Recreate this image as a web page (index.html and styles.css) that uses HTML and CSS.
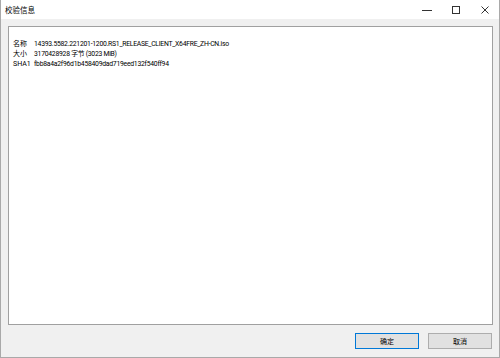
FILE: index.html
```html
<!DOCTYPE html>
<html>
<head>
    <meta charset="UTF-8">
    <title>校验信息</title>
    <link rel="stylesheet" href="styles.css">
</head>
<body>
    <div class="window">
        <div class="title-bar">
            <span class="title">校验信息</span>
            <div class="controls">
                <span class="ctrl">
                    <svg width="10" height="10" viewBox="0 0 10 10"><path d="M0 5.5H10" stroke="#333" stroke-width="1"/></svg>
                </span>
                <span class="ctrl">
                    <svg width="10" height="10" viewBox="0 0 10 10"><rect x="1.5" y="1.5" width="7" height="7" fill="none" stroke="#333" stroke-width="1"/></svg>
                </span>
                <span class="ctrl">
                    <svg width="10" height="10" viewBox="0 0 10 10"><path d="M1.5 1.5L8.5 8.5M8.5 1.5L1.5 8.5" stroke="#333" stroke-width="1"/></svg>
                </span>
            </div>
        </div>

        <div class="panel">
            <div class="row"><span class="label">名称</span><span class="value">14393.5582.221201-1200.RS1_RELEASE_CLIENT_X64FRE_ZH-CN.iso</span></div>
            <div class="row"><span class="label">大小</span><span class="value">3170428928 字节 (3023 MiB)</span></div>
            <div class="row"><span class="label">SHA1</span><span class="value">fbb8a4a2f96d1b458409dad719eed132f540ff94</span></div>
        </div>

        <div class="footer">
            <button class="btn btn-default">确定</button>
            <button class="btn">取消</button>
        </div>
    </div>
</body>
</html>
```

FILE: styles.css
```css
body {
    margin: 0;
    font-family: Roboto, "Noto Sans CJK SC", sans-serif;
    color: #000;
    background-color: #fff;
}

.window {
    box-sizing: border-box;
    width: 500px;
    height: 358px;
    border: 1px solid #a9a9a9;
    border-top: none;
    background-color: #f0f0f0;
    display: flex;
    flex-direction: column;
}

.title-bar {
    height: 19px;
    background-color: #fff;
    display: flex;
    align-items: center;
    justify-content: space-between;
}

.title {
    padding-left: 4px;
    font-size: 7.5px;
    font-family: "Noto Sans CJK SC", sans-serif;
}

.controls {
    display: flex;
    height: 100%;
}

.ctrl {
    width: 29px;
    display: flex;
    align-items: center;
    justify-content: center;
}

.panel {
    box-sizing: border-box;
    margin: 7px 6px 0 7px;
    height: 299px;
    background-color: #fff;
    border: 1px solid #a0a0a0;
    padding: 12px 0 0 4px;
    font-size: 7px;
}

.row {
    display: flex;
    height: 10px;
    line-height: 10px;
    white-space: nowrap;
}

.label {
    width: 21px;
}

.value {
    font-size: 6.8px;
    letter-spacing: -0.25px;
}

.footer {
    display: flex;
    justify-content: flex-end;
    gap: 9px;
    padding: 8px 7px 0 0;
}

.btn {
    box-sizing: border-box;
    width: 64px;
    height: 16px;
    padding: 0;
    font-family: "Noto Sans CJK SC", sans-serif;
    font-size: 7px;
    color: #000;
    background-color: #e1e1e1;
    border: 1px solid #adadad;
}

.btn-default {
    border: 1px solid #0078d7;
}
```
